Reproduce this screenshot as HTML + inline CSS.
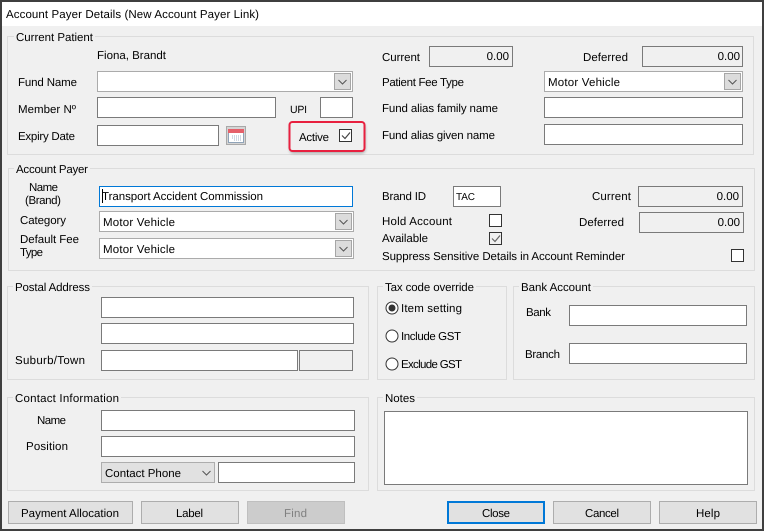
<!DOCTYPE html>
<html><head><meta charset="utf-8"><title>Account Payer Details</title>
<style>
html,body{margin:0;padding:0;background:#f0f0f0;overflow:hidden}
svg{display:block}
text{font-family:"Liberation Sans",sans-serif;font-size:11.5px;fill:#000;text-rendering:geometricPrecision}
.g{fill:none;stroke:#dcdcdc}
.l{fill:#f0f0f0}
.i{fill:#fff;stroke:#7a7a7a}
.d{fill:#f0f0f0;stroke:#7a7a7a}
.c{fill:#fff;stroke:#ababab}
.b{fill:#dcdcdc;stroke:#a6a6a6}
.v{fill:none;stroke:#555;stroke-width:1}
.p{fill:#e1e1e1;stroke:#adadad}
.k{fill:#fff;stroke:#333}
</style></head><body>
<svg width="764" height="531" viewBox="0 0 764 531" xmlns="http://www.w3.org/2000/svg">
<defs><filter id="s" x="-20%" y="-40%" width="140%" height="180%"><feGaussianBlur stdDeviation="1.5"/></filter></defs>
<rect width="764" height="531" fill="#3f3f3f"/>
<rect x="2" y="2" width="760" height="527" fill="#f0f0f0"/>
<rect x="2" y="2" width="760" height="24" fill="#fff"/>
<text x="6" y="18" textLength="253">Account Payer Details (New Account Payer Link)</text>

<!-- Current Patient -->
<rect class="g" x="7.5" y="36.5" width="746" height="118"/>
<rect class="l" x="14" y="32" width="81" height="10"/>
<text x="16" y="41" textLength="77">Current Patient</text>
<text x="97" y="59" textLength="69">Fiona, Brandt</text>
<text x="18" y="86" textLength="59">Fund Name</text>
<rect class="c" x="97.5" y="71.5" width="255" height="20"/>
<rect class="b" x="334.5" y="73.5" width="16" height="16"/>
<path class="v" d="M338.5 80l4 4 4-4"/>
<text x="18" y="113" textLength="58">Member Nº</text>
<rect class="i" x="97.5" y="97.5" width="178" height="20"/>
<text x="290" y="113" textLength="17" style="font-size:10.5px">UPI</text>
<rect class="i" x="320.5" y="97.5" width="32" height="20"/>
<text x="18" y="140" textLength="57">Expiry Date</text>
<rect class="i" x="97.5" y="125.5" width="121" height="20"/>
<rect x="226.5" y="126.5" width="19" height="18" fill="#d4d4d4" stroke="#a8a8a8"/>
<rect x="228.5" y="129.5" width="15" height="13" fill="#fff" stroke="#8fa3b8"/>
<rect x="228" y="129" width="16" height="4" fill="#e5606a"/>
<path d="M232 136h9M232 138h9M234 140h7" stroke="#9fb0c4" stroke-dasharray="1 1" fill="none"/>

<text x="382" y="61" textLength="38">Current</text>
<rect class="d" x="429.5" y="46.5" width="83" height="20"/>
<text x="509" y="60" text-anchor="end">0.00</text>
<text x="583" y="61" textLength="45">Deferred</text>
<rect class="d" x="642.5" y="46.5" width="100" height="20"/>
<text x="740" y="60" text-anchor="end">0.00</text>
<text x="382" y="86" textLength="82">Patient Fee Type</text>
<rect class="c" x="544.5" y="71.5" width="198" height="20"/>
<text x="548" y="86" textLength="72">Motor Vehicle</text>
<rect class="b" x="724.5" y="73.5" width="16" height="16"/>
<path class="v" d="M728.5 80l4 4 4-4"/>
<text x="382" y="112" textLength="116">Fund alias family name</text>
<rect class="i" x="544.5" y="97.5" width="198" height="20"/>
<text x="382" y="139" textLength="113">Fund alias given name</text>
<rect class="i" x="544.5" y="124.5" width="198" height="20"/>

<!-- Active highlight -->
<rect x="290" y="124" width="75" height="29" rx="3" fill="#000" opacity=".35" filter="url(#s)"/>
<rect x="289.5" y="122" width="75" height="29" rx="3" fill="#f0f0f0" stroke="#e8203f" stroke-width="2"/>
<text x="299" y="141" textLength="30">Active</text>
<rect class="k" x="339.5" y="129.5" width="12" height="12"/>
<path d="M342 135.5l3 3 5-6" fill="none" stroke="#444" stroke-width="1.2"/>

<!-- Account Payer -->
<rect class="g" x="8.5" y="168.5" width="746" height="102"/>
<rect class="l" x="14" y="164" width="76" height="10"/>
<text x="16" y="173" textLength="72">Account Payer</text>
<text x="29" y="191" textLength="29">Name</text>
<text x="25" y="204" textLength="36">(Brand)</text>
<rect x="99.5" y="186.5" width="253" height="20" fill="#fff" stroke="#0078d7"/>
<text x="102" y="200" textLength="161">Transport Accident Commission</text>
<path d="M102.5 189v14" stroke="#000"/>
<text x="20" y="224" textLength="46">Category</text>
<rect class="c" x="99.5" y="211.5" width="254" height="20"/>
<text x="103" y="226" textLength="72">Motor Vehicle</text>
<rect class="b" x="335.5" y="213.5" width="16" height="16"/>
<path class="v" d="M339.5 220l4 4 4-4"/>
<text x="20" y="243" textLength="59">Default Fee</text>
<text x="20" y="256" textLength="23">Type</text>
<rect class="c" x="99.5" y="238.5" width="254" height="20"/>
<text x="103" y="253" textLength="72">Motor Vehicle</text>
<rect class="b" x="335.5" y="240.5" width="16" height="16"/>
<path class="v" d="M339.5 247l4 4 4-4"/>

<text x="382" y="200" textLength="44">Brand ID</text>
<rect class="i" x="453.5" y="186.5" width="47" height="20"/>
<text x="456" y="200" textLength="19" style="font-size:10px">TAC</text>
<text x="592" y="200" textLength="39">Current</text>
<rect class="d" x="638.5" y="186.5" width="104" height="20"/>
<text x="739" y="200" text-anchor="end">0.00</text>
<text x="579" y="226" textLength="45">Deferred</text>
<rect class="d" x="639.5" y="212.5" width="104" height="20"/>
<text x="740" y="226" text-anchor="end">0.00</text>
<text x="382" y="225" textLength="70">Hold Account</text>
<rect class="k" x="489.5" y="214.5" width="12" height="12"/>
<text x="382" y="242" textLength="46">Available</text>
<rect x="489.5" y="232.5" width="12" height="12" fill="#f0f0f0" stroke="#333"/>
<path d="M492 238.5l3 3 5-6" fill="none" stroke="#666" stroke-width="1.2"/>
<text x="382" y="260" textLength="243">Suppress Sensitive Details in Account Reminder</text>
<rect class="k" x="731.5" y="249.5" width="12" height="12"/>

<!-- Postal Address -->
<rect class="g" x="7.5" y="286.5" width="361" height="93"/>
<rect class="l" x="13" y="282" width="79" height="10"/>
<text x="15" y="291" textLength="75">Postal Address</text>
<rect class="i" x="101.5" y="297.5" width="252" height="20"/>
<rect class="i" x="101.5" y="323.5" width="252" height="20"/>
<text x="15" y="364" textLength="70">Suburb/Town</text>
<rect class="i" x="101.5" y="350.5" width="196" height="20"/>
<rect class="d" x="299.5" y="350.5" width="53" height="20"/>

<!-- Tax code -->
<rect class="g" x="377.5" y="286.5" width="129" height="93"/>
<rect class="l" x="383" y="282" width="93" height="10"/>
<text x="385" y="291" textLength="89">Tax code override</text>
<circle cx="392" cy="308" r="6" fill="#fff" stroke="#333"/>
<circle cx="392" cy="308" r="3.5" fill="#333"/>
<text x="401" y="312" textLength="61">Item setting</text>
<circle cx="392" cy="336" r="6" fill="#fff" stroke="#333"/>
<text x="401" y="340" textLength="60">Include GST</text>
<circle cx="392" cy="364" r="6" fill="#fff" stroke="#333"/>
<text x="401" y="368" textLength="61">Exclude GST</text>

<!-- Bank Account -->
<rect class="g" x="513.5" y="286.5" width="241" height="93"/>
<rect class="l" x="519" y="282" width="74" height="10"/>
<text x="521" y="291" textLength="70">Bank Account</text>
<text x="526" y="316" textLength="25">Bank</text>
<rect class="i" x="569.5" y="305.5" width="177" height="20"/>
<text x="525" y="358" textLength="35">Branch</text>
<rect class="i" x="569.5" y="343.5" width="177" height="20"/>

<!-- Contact -->
<rect class="g" x="7.5" y="397.5" width="361" height="93"/>
<rect class="l" x="13" y="393" width="108" height="10"/>
<text x="15" y="402" textLength="104">Contact Information</text>
<text x="37" y="424" textLength="29">Name</text>
<rect class="i" x="101.5" y="410.5" width="253" height="20"/>
<text x="26" y="450" textLength="42">Position</text>
<rect class="i" x="101.5" y="436.5" width="253" height="20"/>
<rect class="p" x="101.5" y="462.5" width="113" height="20"/>
<text x="105" y="477" textLength="76">Contact Phone</text>
<path class="v" d="M202.5 471l4 4 4-4"/>
<rect class="i" x="218.5" y="462.5" width="136" height="20"/>

<!-- Notes -->
<rect class="g" x="377.5" y="397.5" width="377" height="93"/>
<rect class="l" x="383" y="393" width="34" height="10"/>
<text x="385" y="402" textLength="30">Notes</text>
<rect class="i" x="384.5" y="411.5" width="363" height="73"/>

<!-- Buttons -->
<rect class="p" x="8.5" y="501.5" width="124" height="22"/>
<text x="21" y="517" textLength="98">Payment Allocation</text>
<rect class="p" x="141.5" y="501.5" width="97" height="22"/>
<text x="176" y="517" textLength="27">Label</text>
<rect x="247.5" y="501.5" width="97" height="22" fill="#ccc" stroke="#bfbfbf"/>
<text x="284" y="517" textLength="23" style="fill:#808080">Find</text>
<rect x="448" y="502" width="96" height="21" fill="#e1e1e1" stroke="#0078d7" stroke-width="2"/>
<text x="482" y="517" textLength="28">Close</text>
<rect class="p" x="553.5" y="501.5" width="97" height="22"/>
<text x="585" y="517" textLength="34">Cancel</text>
<rect class="p" x="659.5" y="501.5" width="97" height="22"/>
<text x="696" y="517" textLength="24">Help</text>
</svg>
</body></html>
